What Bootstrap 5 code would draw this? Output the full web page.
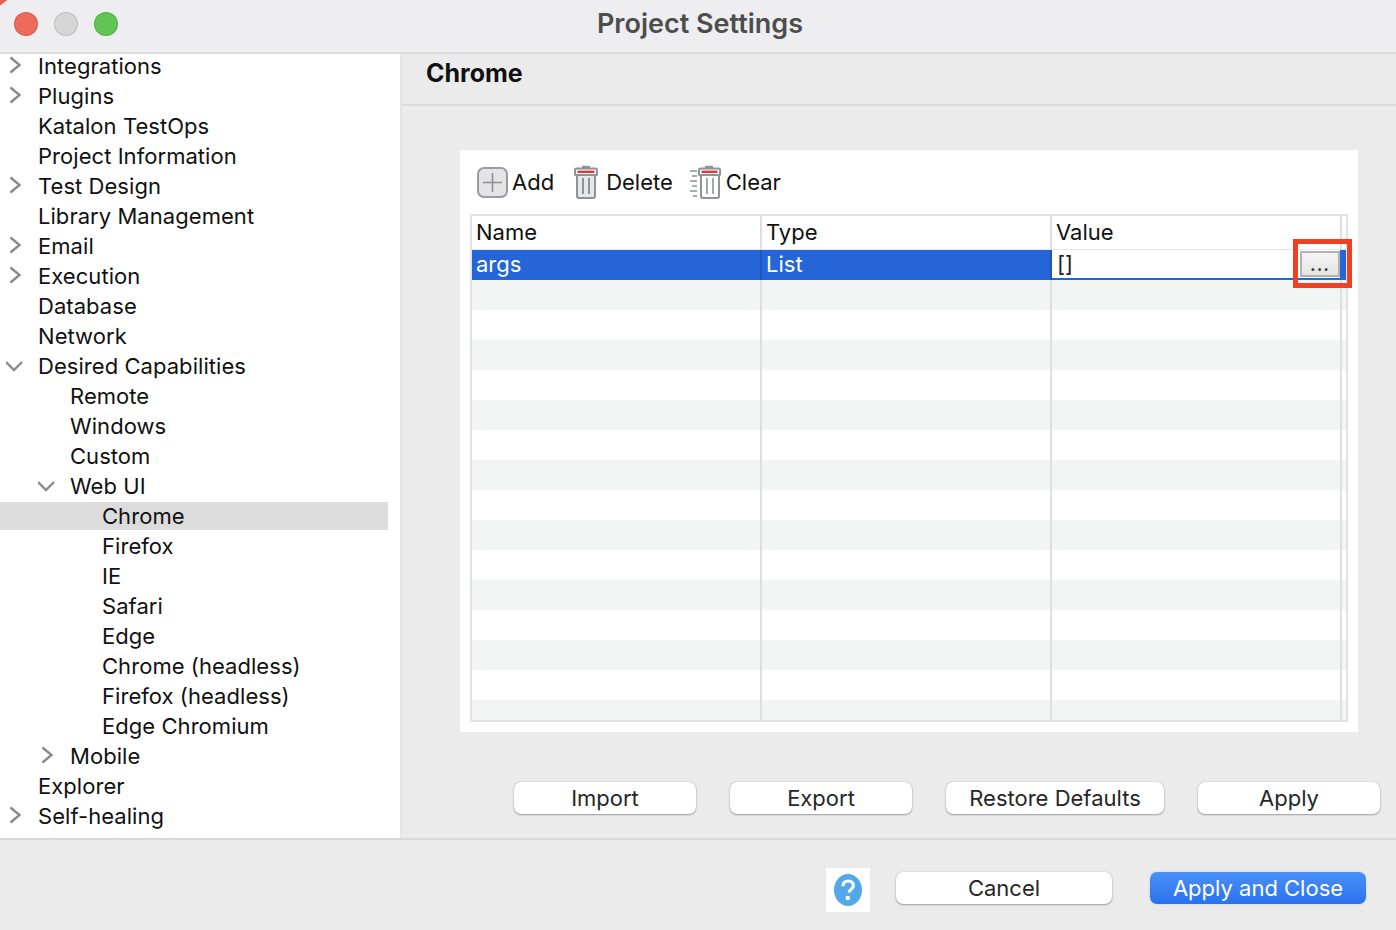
<!DOCTYPE html>
<html lang="en">
<head>
    <meta charset="UTF-8">
    <title>Project Settings</title>
    <link rel="stylesheet" href="https://cdn.jsdelivr.net/npm/bootstrap@5.3.3/dist/css/bootstrap.min.css">
    <style>
        html, body { height: 100%; overflow: hidden; }
        body { font-family: Inter, "Noto Sans", "Liberation Sans", sans-serif; font-size: 22px; color: #1c1c1c; background: #ebebeb; }
        .dialog { width: 1396px; height: 930px; position: relative; }
        .title-bar { height: 54px; background: #eeeef0; border-bottom: 2px solid #dcdcdc; position: relative; }
        .title-text { font-size: 27px; font-weight: 600; color: #4d4d4d; line-height: 47px; padding-left: 4px; }
        .corner-speck { position: absolute; left: 0; top: 0; }
        .traffic { width: 24px; height: 24px; border-radius: 50%; border: 1px solid rgba(0,0,0,.12); }
        .traffic-red { background: #ee6a5f; }
        .traffic-gray { background: #d6d6d6; }
        .traffic-green { background: #61c454; }
        .lights { position: absolute; left: 14px; top: 12px; gap: 16px; }
        .main-area { height: 786px; border-bottom: 2px solid #d9d9d9; }
        .side-tree { width: 402px; background: #fff; border-right: 2px solid #e4e4e4; overflow: hidden; flex: none; }
        .tree-list { margin-top: -3px; }
        .tree-row { height: 30px; line-height: 30px; width: 388px; white-space: nowrap; position: relative; color: #111; letter-spacing: .05px; }
        .tree-row.active-row { background: linear-gradient(#fff 0 1px, #dcdcdc 1px 29px, #fff 29px); }
        .lvl0 { padding-left: 38px; }
        .lvl1 { padding-left: 70px; }
        .lvl2 { padding-left: 102px; }
        .twist { position: absolute; top: 5px; width: 18px; height: 18px; }
        .lvl0 .twist { left: 6px; }
        .lvl1 .twist { left: 38px; }
        .pane { flex: 1; min-width: 0; }
        .pane-head { height: 52px; border-bottom: 2px solid #dcdcdc; padding-left: 24px; font-size: 25px; font-weight: 700; line-height: 38px; color: #111; }
        .pane-box { width: 898px; height: 582px; margin: 44px 0 0 58px; background: #fff; padding: 0 10px; }
        .tool-row { height: 64px; padding-left: 7px; }
        .tool-btn { line-height: 30px; color: #111; }
        .tool-btn svg { flex: none; }
        .tool-add { margin-right: 20px; }
        .tool-delete { margin-right: 16px; }
        .tool-clear span { margin-left: 1px; }
        .grid-wrap { width: 878px; height: 508px; border: 2px solid #e2e2e2; position: relative; overflow: hidden; }
        .param-table { table-layout: fixed; width: 874px; margin: 0; }
        .param-table th, .param-table td { padding: 0 0 0 4px; height: 30px; line-height: 28px; vertical-align: top; font-weight: 400; font-size: 22px; border: 0; border-right: 2px solid #dedede; background: #fff; box-shadow: none; color: #111; white-space: nowrap; }
        .param-table th { height: 34px; box-shadow: inset 0 -1px #e6e6e6; line-height: 32px; }
        .param-table tbody tr:nth-child(even) td { background: #f3f4f4; }
        .param-table tbody tr.selected-row td { background: #2466d8; color: #fff; border-right-color: #2056b8; }
        .param-table th:last-child, .param-table td:last-child { border-right: 0; padding: 0; }
        .param-table tbody tr.selected-row td.edit-cell { background: #fff; color: #222; box-shadow: inset 0 -2px #2466d8; border-right: 0; padding-left: 5px; position: relative; }
        .more-btn { position: absolute; right: 6px; top: 1px; width: 40px; height: 26px; background: linear-gradient(#f4f4f4, #e4e4e4); border: 2px solid #b2b2b2; font-size: 18px; font-weight: 600; line-height: 24px; text-align: center; color: #333; padding: 0; letter-spacing: 1px; }
        .edit-tail { position: absolute; right: 0; top: 0; width: 6px; height: 30px; background: #2466d8; }
        .red-mark { position: absolute; left: 1293px; top: 239px; width: 59px; height: 49px; border: 5px solid #ee4023; pointer-events: none; }
        .btn-row { height: 32px; margin-top: 50px; padding-left: 112px; gap: 34px; }
        .mac-btn { height: 32px; width: 182px; padding: 0; font-size: 22px; line-height: 32px; background: #fff; border: 0; border-radius: 7px; color: #262626; box-shadow: 0 0 1px rgba(0,0,0,.35), 0 1px 2px rgba(0,0,0,.3); }
        .mac-btn:hover { background: #fff; color: #262626; }
        .wide-restore { width: 218px; }
        .wide-foot { width: 216px; }
        .mac-btn.primary-btn { background: linear-gradient(#4a90f8, #2a72ee); color: #fff; box-shadow: 0 0 2px rgba(40,110,240,.3); }
        .foot-bar { height: 90px; padding: 28px 0 0 826px; }
        .help-box { width: 44px; height: 44px; background: #fff; margin: 0 26px 0 0; flex: none; }
        .foot-btns { gap: 38px; padding-top: 4px; }
    </style>
</head>
<body>
<div class="dialog">
    <div class="title-bar text-center">
        <svg class="corner-speck" width="8" height="6" viewBox="0 0 8 6"><path d="M0 0h7.5L0 5.5z" fill="#ee5a4c"/></svg>
        <div class="lights d-flex">
            <div class="traffic traffic-red"></div>
            <div class="traffic traffic-gray"></div>
            <div class="traffic traffic-green"></div>
        </div>
        <div class="title-text">Project Settings</div>
    </div>

    <div class="main-area d-flex">
        <div class="side-tree">
            <div class="tree-list" id="tree"></div>
        </div>
        <div class="pane">
            <div class="pane-head">Chrome</div>
            <div class="pane-box">
                <div class="tool-row d-flex align-items-center">
                    <div class="tool-btn tool-add d-flex align-items-center gap-1">
                        <svg width="31" height="31" viewBox="0 0 31 31"><rect x="1" y="1" width="29" height="29" rx="6" fill="#e4e4e6" stroke="#9a9ca0" stroke-width="2"/><path d="M15.5 6v19M6 15.5h19" stroke="#8d8f93" stroke-width="1.6"/></svg>
                        <span>Add</span>
                    </div>
                    <div class="tool-btn tool-delete d-flex align-items-center gap-2">
                        <svg width="24" height="34" viewBox="0 0 24 34"><path d="M8 2h8" stroke="#8f9296" stroke-width="2.4"/><rect x="1" y="3.5" width="22" height="7" rx="1.5" fill="#fff" stroke="#8f9296" stroke-width="2"/><path d="M3.5 6.8h17" stroke="#e8343a" stroke-width="2.4"/><path d="M3 10h18v21a2 2 0 0 1-2 2H5a2 2 0 0 1-2-2z" fill="#e6e7e9" stroke="#8f9296" stroke-width="2"/><path d="M9 13v16M15 13v16" stroke="#8f9296" stroke-width="2"/></svg>
                        <span>Delete</span>
                    </div>
                    <div class="tool-btn tool-clear d-flex align-items-center gap-1">
                        <svg width="32" height="34" viewBox="0 0 32 34"><path d="M1 6h7M3 11h5M1 16h7M3 21h5M1 26h7M4 31h4" stroke="#8f9296" stroke-width="1.5"/><path d="M16 2h8" stroke="#8f9296" stroke-width="2.4"/><rect x="10" y="3.5" width="21" height="7" rx="1.5" fill="#fff" stroke="#8f9296" stroke-width="2"/><path d="M12.5 6.8h16" stroke="#e8343a" stroke-width="2.4"/><path d="M12 10h18v21a2 2 0 0 1-2 2H14a2 2 0 0 1-2-2z" fill="#fff" stroke="#8f9296" stroke-width="2"/><path d="M18 13v16M24 13v16" stroke="#8f9296" stroke-width="1.6"/></svg>
                        <span>Clear</span>
                    </div>
                </div>
                <div class="grid-wrap">
                    <table class="table param-table">
                        <colgroup><col style="width:289px"><col style="width:290px"><col style="width:290px"><col style="width:5px"></colgroup>
                        <thead><tr><th>Name</th><th>Type</th><th>Value</th><th></th></tr></thead>
                        <tbody id="rows"></tbody>
                    </table>
                </div>
            </div>
            <div class="btn-row d-flex">
                <button type="button" class="btn mac-btn">Import</button>
                <button type="button" class="btn mac-btn">Export</button>
                <button type="button" class="btn mac-btn wide-restore">Restore Defaults</button>
                <button type="button" class="btn mac-btn">Apply</button>
            </div>
        </div>
    </div>

    <div class="foot-bar d-flex">
        <div class="help-box d-flex align-items-center justify-content-center">
            <svg width="32" height="34" viewBox="0 0 32 34"><ellipse cx="16" cy="17" rx="14" ry="16" fill="#52a8ea"/><path d="M10.8 13.2c0-3.2 2.3-5.2 5.4-5.2 3 0 5.2 1.8 5.2 4.5 0 2-1.1 3.1-2.6 4.2-1.2.9-1.6 1.5-1.6 2.8" fill="none" stroke="#fff" stroke-width="3.2"/><circle cx="15.8" cy="25" r="2.3" fill="#fff"/></svg>
        </div>
        <div class="foot-btns d-flex">
            <button type="button" class="btn mac-btn wide-foot">Cancel</button>
            <button type="button" class="btn mac-btn wide-foot primary-btn">Apply and Close</button>
        </div>
    </div>

    <div class="red-mark"></div>
</div>

<script>
    const treeItems = [
        ['Integrations', 0, 'r'], ['Plugins', 0, 'r'], ['Katalon TestOps', 0], ['Project Information', 0],
        ['Test Design', 0, 'r'], ['Library Management', 0], ['Email', 0, 'r'], ['Execution', 0, 'r'],
        ['Database', 0], ['Network', 0], ['Desired Capabilities', 0, 'd'], ['Remote', 1], ['Windows', 1],
        ['Custom', 1], ['Web UI', 1, 'd'], ['Chrome', 2], ['Firefox', 2], ['IE', 2], ['Safari', 2], ['Edge', 2],
        ['Chrome (headless)', 2], ['Firefox (headless)', 2], ['Edge Chromium', 2], ['Mobile', 1, 'r'],
        ['Explorer', 0], ['Self-healing', 0, 'r']
    ];
    const twist = {
        r: '<path d="M4.5 1.5l9 7.5-9 7.5" />',
        d: '<path d="M0 6l8 8 8-8" />'
    };
    document.getElementById('tree').innerHTML = treeItems.map(([name, lvl, arrow]) => {
        const icon = arrow ? `<svg class="twist" viewBox="0 0 18 18" fill="none" stroke="#8a8a8a" stroke-width="2.4">${twist[arrow]}</svg>` : '';
        const active = name === 'Chrome' ? ' active-row' : '';
        return `<div class="tree-row lvl${lvl}${active}">${icon}${name}</div>`;
    }).join('');

    let rows = `<tr class="selected-row"><td>args</td><td>List</td><td class="edit-cell" colspan="2">[]<div class="more-btn">...</div><div class="edit-tail"></div></td></tr>`;
    for (let i = 0; i < 15; i++) rows += '<tr><td></td><td></td><td></td><td></td></tr>';
    document.getElementById('rows').innerHTML = rows;
</script>
<script src="https://cdn.jsdelivr.net/npm/bootstrap@5.3.3/dist/js/bootstrap.bundle.min.js"></script>
</body>
</html>
